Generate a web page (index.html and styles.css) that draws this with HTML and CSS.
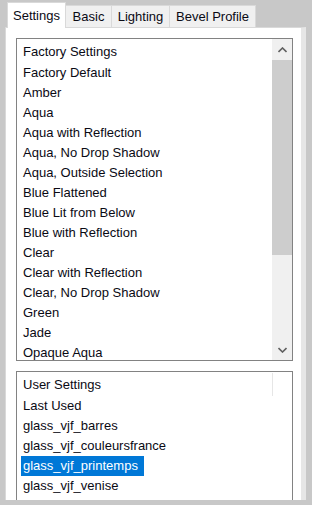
FILE: index.html
```html
<!doctype html>
<html lang="en">
  <head>
    <meta charset="UTF-8" />
    <meta name="viewport" content="width=device-width, initial-scale=1.0" />
    <title>Preset Settings</title>
    <link rel="stylesheet" href="styles.css">
  </head>
  <body>
    <div class="window">
      <div class="tabs">
        <div class="tab active tab-settings">Settings</div>
        <div class="tab tab-basic">Basic</div>
        <div class="tab tab-lighting">Lighting</div>
        <div class="tab tab-bevel">Bevel Profile</div>
      </div>

      <div class="panel">
        <div class="listbox factory">
          <div class="list">
            <div class="list-header">Factory Settings</div>
            <div class="item"><span>Factory Default</span></div>
            <div class="item"><span>Amber</span></div>
            <div class="item"><span>Aqua</span></div>
            <div class="item"><span>Aqua with Reflection</span></div>
            <div class="item"><span>Aqua, No Drop Shadow</span></div>
            <div class="item"><span>Aqua, Outside Selection</span></div>
            <div class="item"><span>Blue Flattened</span></div>
            <div class="item"><span>Blue Lit from Below</span></div>
            <div class="item"><span>Blue with Reflection</span></div>
            <div class="item"><span>Clear</span></div>
            <div class="item"><span>Clear with Reflection</span></div>
            <div class="item"><span>Clear, No Drop Shadow</span></div>
            <div class="item"><span>Green</span></div>
            <div class="item"><span>Jade</span></div>
            <div class="item"><span>Opaque Aqua</span></div>
          </div>
          <div class="scrollbar">
            <div class="sb-btn">
              <svg width="9" height="6" viewBox="0 0 9 6"><polyline points="0.5,5 4.5,1 8.5,5" fill="none" stroke="#606060" stroke-width="1.6" /></svg>
            </div>
            <div class="sb-track">
              <div class="sb-thumb"></div>
            </div>
            <div class="sb-btn">
              <svg width="9" height="6" viewBox="0 0 9 6"><polyline points="0.5,1 4.5,5 8.5,1" fill="none" stroke="#606060" stroke-width="1.6" /></svg>
            </div>
          </div>
        </div>

        <div class="listbox user">
          <div class="list">
            <div class="list-header">User Settings</div>
            <div class="item"><span>Last Used</span></div>
            <div class="item"><span>glass_vjf_barres</span></div>
            <div class="item"><span>glass_vjf_couleursfrance</span></div>
            <div class="item selected"><span>glass_vjf_printemps</span></div>
            <div class="item"><span>glass_vjf_venise</span></div>
          </div>
        </div>
      </div>
    </div>
  </body>
</html>
```

FILE: styles.css
```css
body {
  margin: 0;
  width: 312px;
  height: 505px;
  overflow: hidden;
  background: #c8c8c8;
  font-family: "Liberation Sans", Arial, sans-serif;
  font-size: 13px;
  color: #0a0a14;
}
.window {
  margin-left: 5px;
  width: 301px;
  height: 500px;
  display: flex;
  flex-direction: column;
}
.tabs {
  display: flex;
  align-items: flex-end;
  height: 27px;
  padding-left: 2px;
  position: relative;
  z-index: 1;
}
.tab {
  box-sizing: border-box;
  height: 22px;
  line-height: 22px;
  margin-left: -1px;
  background: #f0f0f0;
  border: 1px solid #d9d9d9;
  border-bottom: none;
  text-align: center;
  white-space: nowrap;
}
.tab.active {
  height: 26px;
  line-height: 25px;
  margin-left: 0;
  margin-bottom: -1px;
  background: #fff;
}
.tab-settings {
  width: 59px;
}
.tab-basic {
  width: 47px;
}
.tab-lighting {
  width: 59px;
}
.tab-bevel {
  width: 87px;
}
.panel {
  flex: 1;
  box-sizing: border-box;
  padding: 10px 0 0 10px;
  background: #fff;
  border: 1px solid #d9d9d9;
  border-right: 5px solid #e6e6e6;
  border-bottom: none;
  overflow: hidden;
}
.listbox {
  box-sizing: border-box;
  width: 277px;
  border: 1px solid #828282;
  display: flex;
  background: #fff;
}
.listbox.factory {
  height: 323px;
}
.listbox.user {
  height: 140px;
  margin-top: 10px;
}
.list {
  flex: 1;
  overflow: hidden;
  padding: 1px 0 0 4px;
}
.list-header {
  height: 23px;
  line-height: 23px;
  padding-left: 2px;
}
.user .list-header {
  box-sizing: border-box;
  width: 252px;
  border-right: 1px solid #e6e6e6;
}
.item {
  height: 20px;
  line-height: 20px;
  white-space: nowrap;
}
.item span {
  display: inline-block;
  padding: 0 6px 0 2px;
}
.item.selected span {
  background: #0078d7;
  color: #fff;
}
.scrollbar {
  width: 20px;
  background: #f0f0f0;
  display: flex;
  flex-direction: column;
}
.sb-btn {
  height: 21px;
  display: flex;
  align-items: center;
  justify-content: center;
}
.sb-btn svg {
  display: block;
}
.sb-track {
  flex: 1;
}
.sb-thumb {
  height: 195px;
  background: #cdcdcd;
}
```
